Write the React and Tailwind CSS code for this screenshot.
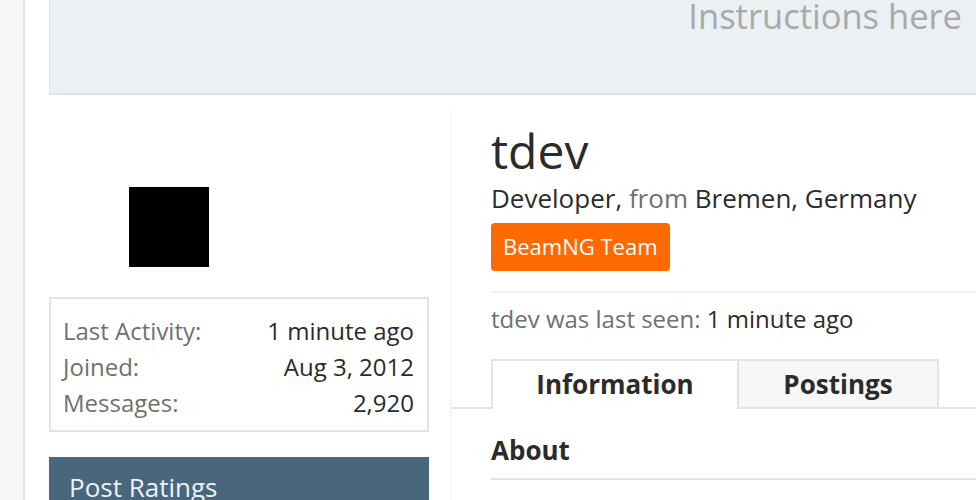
const App = () => {
  return (
    <div className="flex min-h-[500px] h-[500px] overflow-hidden bg-white font-['Open_Sans',sans-serif] text-[#2b2b2b]">
      <div className="w-[25px] shrink-0 bg-[#f5f7f9] border-r-2 border-[#e2e4e6]" />

      <div className="flex-1 pl-[24px]">
        <div className="h-[95px] bg-[#ebf0f4] border-l border-b-2 border-[#dce3e9] flex justify-end pr-[14px]">
          <div className="text-[34.5px] leading-[34px] -mt-[1px] text-[#a9a9a9]">Instructions here</div>
        </div>

        <div className="flex mt-[12px]">
          <div className="w-[380px] shrink-0">
            <div className="pt-[80px] pl-[80px]">
              <div className="w-[80px] h-[80px] bg-black" />
            </div>

            <div className="mt-[30px] border-2 border-[#e3e3e3] pl-[12px] pr-[13px] pt-[14px] pb-[9px] text-[24px] leading-[36px]">
              <div className="flex justify-between">
                <span className="text-[#707070]">Last Activity:</span>
                <span>1 minute ago</span>
              </div>
              <div className="flex justify-between">
                <span className="text-[#707070]">Joined:</span>
                <span>Aug 3, 2012</span>
              </div>
              <div className="flex justify-between">
                <span className="text-[#707070]">Messages:</span>
                <span>2,920</span>
              </div>
            </div>

            <div className="mt-[25px] bg-[#48667c] px-[20px] pt-[14px] pb-[12px] text-[26px] leading-[32px] text-[#eef2f5]">
              Post Ratings
            </div>
          </div>

          <div className="ml-[21px] flex-1 border-l border-[#f3f3f3]">
            <div className="pl-[40px]">
              <h1 className="text-[48px] leading-[64px] mt-[12px]">tdev</h1>
              <div className="text-[26px] leading-[32px] -mt-[1px]">
                Developer, <span className="text-[#707070]">from</span> Bremen, Germany
              </div>
              <div className="mt-[9px] inline-block rounded-[4px] bg-[#ff6a00] px-[12px] pt-[8px] pb-[9px] text-[22px] leading-[31px] text-white">
                BeamNG Team
              </div>
              <div className="mt-[20px] border-t-2 border-[#f3f3f3] pt-[11px] text-[24px] leading-[30px]">
                <span className="text-[#707070]">tdev was last seen:</span> 1 minute ago
              </div>
            </div>

            <div className="mt-[25px] flex border-b-2 border-[#e3e3e3] pl-[40px]">
              <div className="-mb-[2px] w-[248px] border-2 border-b-0 border-[#e3e3e3] bg-white pt-[7px] pb-[9px] text-center text-[26px] font-bold leading-[32px]">
                Information
              </div>
              <div className="w-[200px] border-2 border-l-0 border-b-0 border-[#e3e3e3] bg-[#f7f7f7] pt-[7px] pb-[7px] text-center text-[26px] font-bold leading-[32px]">
                Postings
              </div>
            </div>

            <div className="pl-[40px] pt-[25px]">
              <div className="border-b-2 border-[#e3e3e3] pb-[12px] text-[26px] font-bold leading-[32px]">About</div>
            </div>
          </div>
        </div>
      </div>
    </div>
  );
};

export default App;
